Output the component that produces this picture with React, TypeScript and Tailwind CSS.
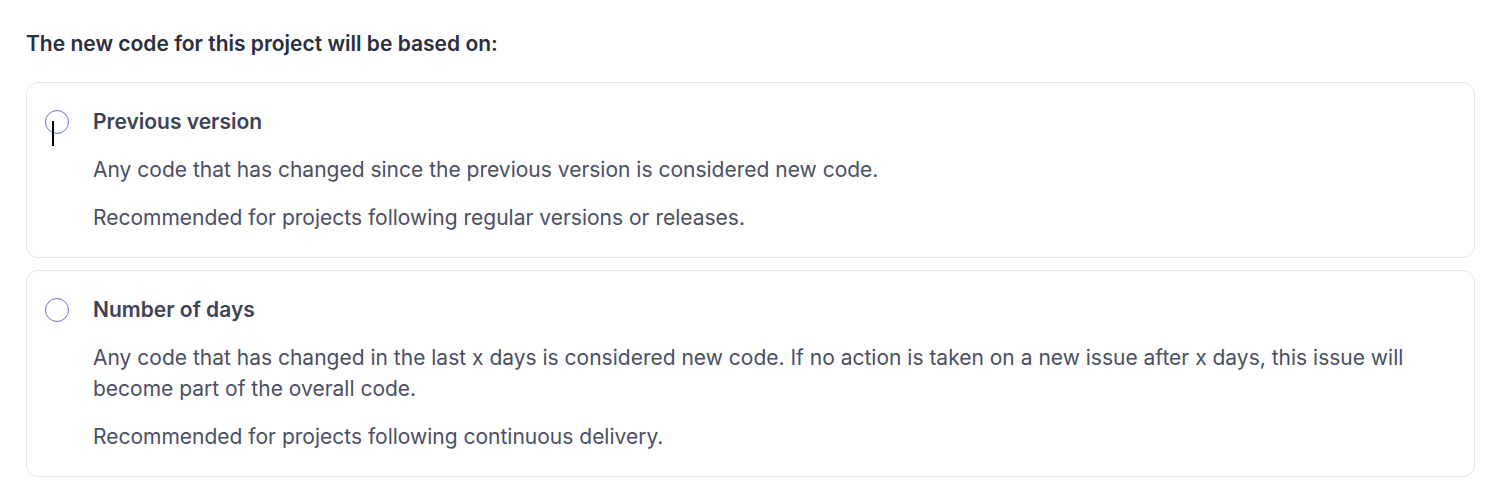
const options = [
  {
    title: 'Previous version',
    lines: [
      'Any code that has changed since the previous version is considered new code.',
      'Recommended for projects following regular versions or releases.',
    ],
    cursor: true,
  },
  {
    title: 'Number of days',
    lines: [
      'Any code that has changed in the last x days is considered new code. If no action is taken on a new issue after x days, this issue will become part of the overall code.',
      'Recommended for projects following continuous delivery.',
    ],
    cursor: false,
  },
];

export default function App() {
  return (
    <div className="min-h-[494px] bg-white pl-[26px] pr-[23px] pt-[29px] font-['Inter',sans-serif]">
      <h2 className="text-[21px] leading-[30px] font-semibold text-[#2a2e3e]">
        The new code for this project will be based on:
      </h2>

      <div className="mt-[23px] flex flex-col gap-3">
        {options.map((opt) => (
          <div
            key={opt.title}
            className="relative flex gap-6 rounded-xl border border-[#e1e5f2] pl-[18px] pr-6 py-6"
          >
            <div className="flex h-[30px] items-center">
              <span className="relative block h-6 w-6 rounded-full border border-[#6b72d8]">
                {opt.cursor && (
                  <span className="absolute left-[6px] top-[10px] h-[25px] w-[2px] bg-black" />
                )}
              </span>
            </div>
            <div className="flex-1">
              <div className="text-[21px] leading-[30px] font-semibold text-[#3d4257]">
                {opt.title}
              </div>
              {opt.lines.map((line) => (
                <p
                  key={line}
                  className="mt-[17px] text-[21px] leading-[31px] text-[#4a4f66]"
                >
                  {line}
                </p>
              ))}
            </div>
          </div>
        ))}
      </div>
    </div>
  );
}
